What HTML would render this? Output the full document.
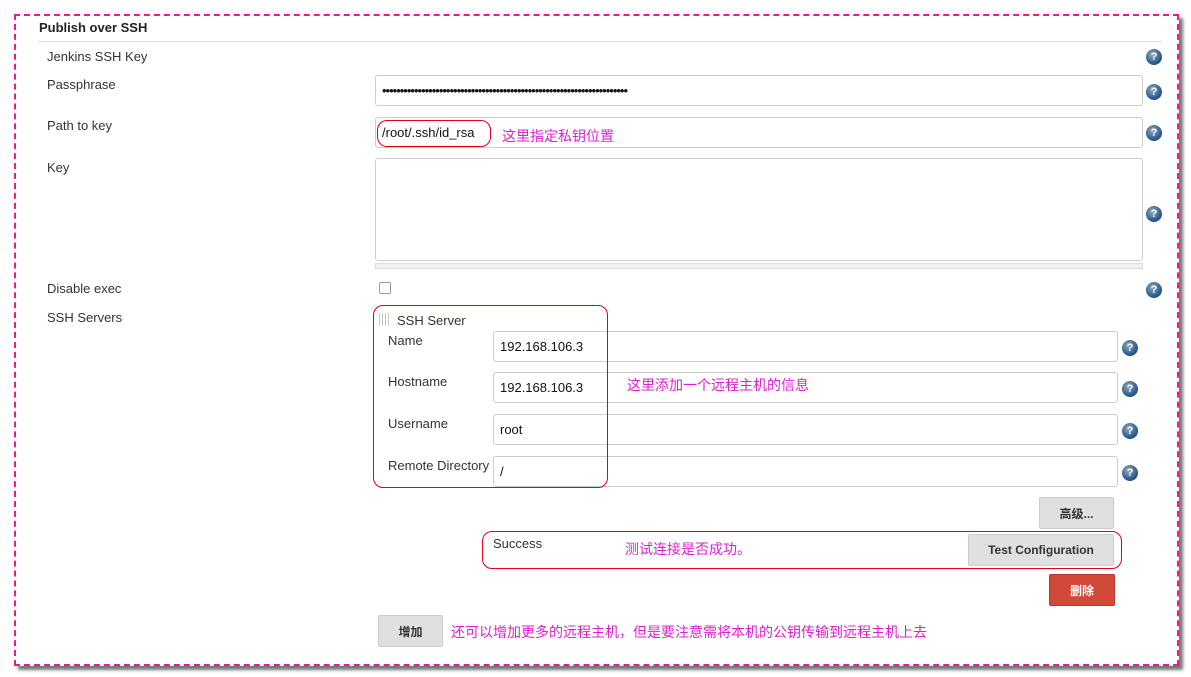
<!DOCTYPE html>
<html><head><meta charset="utf-8"><style>
body{margin:0;width:1191px;height:677px;background:#fff;position:relative;overflow:hidden;font-family:"Liberation Sans","Noto Sans CJK SC",sans-serif;font-size:13px;color:#333}
.a{position:absolute}
.frame{left:14px;top:14px;width:1161px;height:648px;border:2px dashed #ee1a8a;box-shadow:4px 4px 3px #777}
.lbl{color:#333;font-size:13px}
.in{position:absolute;border:1px solid #ccc;border-radius:3px;background:#fff;box-sizing:border-box;padding:0 6px;font-size:13px;color:#111;display:flex;align-items:center}
.help{position:absolute;width:16px;height:16px;border-radius:50%;background:radial-gradient(circle at 40% 35%,#9ab 0,#2a5d8f 60%,#1b3f66 100%);color:#fff;font-size:11px;font-weight:bold;text-align:center;line-height:16px}
.pink{color:#e020d0;font-size:14px;z-index:3}
.btn{position:absolute;background:#e0e0e0;border:1px solid #ccc;border-radius:2px;font-size:12px;font-weight:bold;color:#333;display:flex;align-items:center;justify-content:center;box-sizing:border-box}
.red{position:absolute;border:1px solid #e0001a;border-radius:10px;z-index:2}
</style></head><body>
<div class="a frame"></div>
<div class="a" style="left:39px;top:20px;font-weight:bold;font-size:13px;color:#222">Publish over SSH</div>
<div class="a" style="left:38px;top:41px;width:1124px;height:1px;background:#ddd"></div>
<div class="a lbl" style="left:47px;top:49px">Jenkins SSH Key</div>
<div class="help" style="left:1146px;top:49px">?</div>
<div class="a lbl" style="left:47px;top:77px">Passphrase</div>
<div class="in" style="left:375px;top:75px;width:768px;height:31px;letter-spacing:-1px">•••••••••••••••••••••••••••••••••••••••••••••••••••••••••••••••••••••</div>
<div class="help" style="left:1146px;top:84px">?</div>
<div class="a lbl" style="left:47px;top:118px">Path to key</div>
<div class="in" style="left:375px;top:117px;width:768px;height:31px">/root/.ssh/id_rsa</div>
<div class="red" style="left:377px;top:120px;width:112px;height:25px"></div>
<div class="a pink" style="left:502px;top:126px">这里指定私钥位置</div>
<div class="help" style="left:1146px;top:125px">?</div>
<div class="a lbl" style="left:47px;top:160px">Key</div>
<div class="in" style="left:375px;top:158px;width:768px;height:103px"></div>
<div class="a" style="left:375px;top:263px;width:768px;height:6px;background:#f0f0f0;border:1px solid #ddd;box-sizing:border-box"></div>
<div class="help" style="left:1146px;top:206px">?</div>
<div class="a lbl" style="left:47px;top:281px">Disable exec</div>
<div class="a" style="left:379px;top:282px;width:10px;height:10px;border:1px solid #999;border-radius:2px"></div>
<div class="help" style="left:1146px;top:282px">?</div>
<div class="a lbl" style="left:47px;top:310px">SSH Servers</div>
<div class="red" style="left:373px;top:305px;width:233px;height:181px"></div>
<div class="a" style="left:379px;top:313px;width:11px;height:13px;background:repeating-linear-gradient(90deg,#bbb 0 1px,transparent 1px 3px),#fff;opacity:.8"></div>
<div class="a lbl" style="left:397px;top:313px">SSH Server</div>
<div class="a lbl" style="left:388px;top:333px">Name</div>
<div class="in" style="left:493px;top:331px;width:625px;height:31px">192.168.106.3</div>
<div class="help" style="left:1122px;top:340px">?</div>
<div class="a lbl" style="left:388px;top:374px">Hostname</div>
<div class="in" style="left:493px;top:372px;width:625px;height:31px">192.168.106.3</div>
<div class="a pink" style="left:627px;top:375px">这里添加一个远程主机的信息</div>
<div class="help" style="left:1122px;top:381px">?</div>
<div class="a lbl" style="left:388px;top:416px">Username</div>
<div class="in" style="left:493px;top:414px;width:625px;height:31px">root</div>
<div class="help" style="left:1122px;top:423px">?</div>
<div class="a lbl" style="left:388px;top:458px">Remote Directory</div>
<div class="in" style="left:493px;top:456px;width:625px;height:31px">/</div>
<div class="help" style="left:1122px;top:465px">?</div>
<div class="btn" style="left:1039px;top:497px;width:75px;height:32px">高级...</div>
<div class="red" style="left:482px;top:531px;width:638px;height:36px"></div>
<div class="a lbl" style="left:493px;top:536px">Success</div>
<div class="a pink" style="left:625px;top:539px">测试连接是否成功。</div>
<div class="btn" style="left:968px;top:534px;width:146px;height:32px">Test Configuration</div>
<div class="btn" style="left:1049px;top:574px;width:66px;height:32px;background:#d24939;border-color:#b33;color:#fff">删除</div>
<div class="btn" style="left:378px;top:615px;width:65px;height:32px">增加</div>
<div class="a pink" style="left:451px;top:622px">还可以增加更多的远程主机，但是要注意需将本机的公钥传输到远程主机上去</div>
</body></html>
